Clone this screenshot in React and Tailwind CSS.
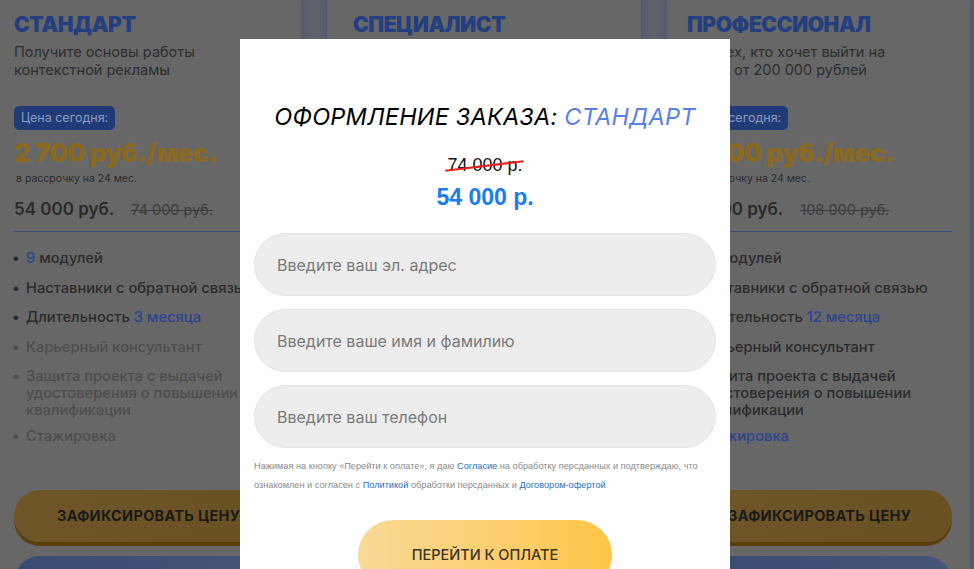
import React from "react";

const sans = { fontFamily: "Inter, 'Noto Sans', sans-serif" };

function Card({ title, sub1, sub2, price, total, old, items, widthCls, padCls }) {
  return (
    <div className={`${widthCls} ${padCls} shrink-0 bg-[#676767] shadow-[0_0_8px_1px_rgba(40,60,130,0.4)] pt-[12px] pr-[18px] flex flex-col`}>
      <div className="text-[21px] leading-[26px] font-black tracking-[-0.4px] text-[#233f80]">{title}</div>
      <div className="mt-[5px] text-[14.5px] leading-[18px] text-[#2e2e2e]">
        <div>{sub1}</div>
        <div>{sub2}</div>
      </div>
      <div className="mt-[25px]">
        <span className="inline-block rounded-[5px] bg-[#213b77] px-[7px] py-[3px] text-[12.5px] leading-[18px] text-[#8a9bc3]">Цена сегодня:</span>
      </div>
      <div className="mt-[8px] text-[26px] leading-[30px] font-black tracking-[-0.6px] text-[#8a6a22] whitespace-nowrap">{price}</div>
      <div className="mt-[4px] ml-[2px] text-[10.5px] leading-[14px] text-[#2a2a2a]">в рассрочку на 24 мес.</div>
      <div className="mt-[13px] flex items-baseline gap-[17px] whitespace-nowrap">
        <span className="text-[17px] leading-[20px] font-semibold text-[#2a2a2a]">{total}</span>
        <span className="text-[14.5px] leading-[18px] line-through text-[#3c3c3c]">{old}</span>
      </div>
      <div className="mt-[12px] h-px bg-[#3b4a78]" />
      <ul className="mt-[18px] -ml-[2px] flex flex-col text-[14.7px] leading-[17px] font-medium">
        {items.map((it, i) => (
          <li
            key={i}
            className={`flex gap-[9px] ${i === 0 ? "" : i === items.length - 1 ? "mt-[9px]" : "mt-[12.5px]"} ${it.light ? "text-[#4d4d4d]" : "text-[#2b2b2b]"}`}
          >
            <span className="w-[5px] shrink-0">•</span>
            <span className="whitespace-pre-line">{it.node}</span>
          </li>
        ))}
      </ul>
      <div className="mt-[45px] h-[52px] rounded-full bg-gradient-to-r from-[#6e5628] to-[#6a5123] shadow-[0_4px_0_#5a3f0c] flex items-center justify-center text-[14.5px] font-bold tracking-[0.3px] text-[#1a1a1a] whitespace-nowrap">
        ЗАФИКСИРОВАТЬ ЦЕНУ
      </div>
      <div className="mt-[14px] h-[52px] rounded-t-[26px] bg-gradient-to-r from-[#3b4a72] to-[#48557a]" />
    </div>
  );
}

const B = ({ children }) => <span className="text-[#2a4591]">{children}</span>;

export default function App() {
  return (
    <div className="relative w-[974px] h-[569px] overflow-hidden bg-[#5f626d]" style={sans}>
      <div className="flex gap-[26px] -ml-[6px]">
        <Card
          widthCls="w-[307px]"
          padCls="pl-[20px]"
          title="СТАНДАРТ"
          sub1="Получите основы работы"
          sub2="контекстной рекламы"
          price="2 700 руб./мес."
          total="54 000 руб."
          old="74 000 руб."
          items={[
            { node: <><B>9</B> модулей</> },
            { node: "Наставники с обратной связью" },
            { node: <>Длительность <B>3 месяца</B></> },
            { node: "Карьерный консультант", light: true },
            { node: "Защита проекта с выдачей\nудостоверения о повышении\nквалификации", light: true },
            { node: "Стажировка", light: true },
          ]}
        />
        <Card
          widthCls="w-[314px]"
          padCls="pl-[26px]"
          title="СПЕЦИАЛИСТ"
          sub1="Освойте профессию"
          sub2="специалиста по рекламе"
          price="3 500 руб./мес."
          total="72 000 руб."
          old="96 000 руб."
          items={[
            { node: <><B>12</B> модулей</> },
            { node: "Наставники с обратной связью" },
            { node: <>Длительность <B>6 месяцев</B></> },
            { node: "Карьерный консультант" },
            { node: "Защита проекта с выдачей\nудостоверения о повышении\nквалификации" },
            { node: "Стажировка", light: true },
          ]}
        />
        <Card
          widthCls="w-[303px]"
          padCls="pl-[20px]"
          title="ПРОФЕССИОНАЛ"
          sub1="Для тех, кто хочет выйти на"
          sub2="доход от 200 000 рублей"
          price="4 500 руб./мес."
          total="81 000 руб."
          old="108 000 руб."
          items={[
            { node: <><B>15</B> модулей</> },
            { node: "Наставники с обратной связью" },
            { node: <>Длительность <B>12 месяца</B></> },
            { node: "Карьерный консультант" },
            { node: "Защита проекта с выдачей\nудостоверения о повышении\nквалификации" },
            { node: <B>Стажировка</B> },
          ]}
        />
      </div>

      {/* Modal */}
      <div className="absolute left-[240px] top-[39px] w-[490px] h-[560px] bg-white flex flex-col items-center pt-[63px]">
        <div className="text-[23.5px] leading-[30px] italic tracking-[0.2px] text-black whitespace-nowrap">
          ОФОРМЛЕНИЕ ЗАКАЗА: <span className="text-[#5b7fe6]">СТАНДАРТ</span>
        </div>
        <div className="mt-[22px] relative text-[18px] leading-[22px] text-[#111]" style={{ fontFamily: "'Liberation Sans', Arial, sans-serif" }}>
          74 000 р.
          <span className="absolute left-[-2px] right-[-2px] top-[11px] h-[2px] bg-[#e8231f] -rotate-[7deg]" />
        </div>
        <div className="mt-[7px] text-[23px] leading-[28px] font-bold text-[#1a7cf0]" style={{ fontFamily: "'Liberation Sans', Arial, sans-serif" }}>
          54 000 р.
        </div>
        <div className="mt-[22px] w-[462px] flex flex-col gap-[13px]">
          {["Введите ваш эл. адрес", "Введите ваше имя и фамилию", "Введите ваш телефон"].map((p) => (
            <div key={p} className="h-[63px] rounded-full bg-[#ededed] border border-[#e3e3e3] flex items-center pl-[22px] text-[16px] text-[#7a7a7a]">
              {p}
            </div>
          ))}
        </div>
        <div className="mt-[9px] w-[462px] text-[9.2px] leading-[19px] text-[#8a8a8a] whitespace-nowrap" style={{ fontFamily: "'Liberation Sans', Arial, sans-serif" }}>
          Нажимая на кнопку «Перейти к оплате», я даю <span className="text-[#2f6fb8]">Согласие</span> на обработку персданных и подтверждаю, что
          <br />
          ознакомлен и согласен с <span className="text-[#2f6fb8]">Политикой</span> обработки персданных и <span className="text-[#2f6fb8]">Договором-офертой</span>
        </div>
        <div className="mt-[25px] w-[254px] h-[70px] rounded-full bg-gradient-to-r from-[#f8da96] to-[#fec545] flex items-center justify-center text-[14.5px] font-medium text-[#3b3328]">
          ПЕРЕЙТИ К ОПЛАТЕ
        </div>
      </div>
    </div>
  );
}
